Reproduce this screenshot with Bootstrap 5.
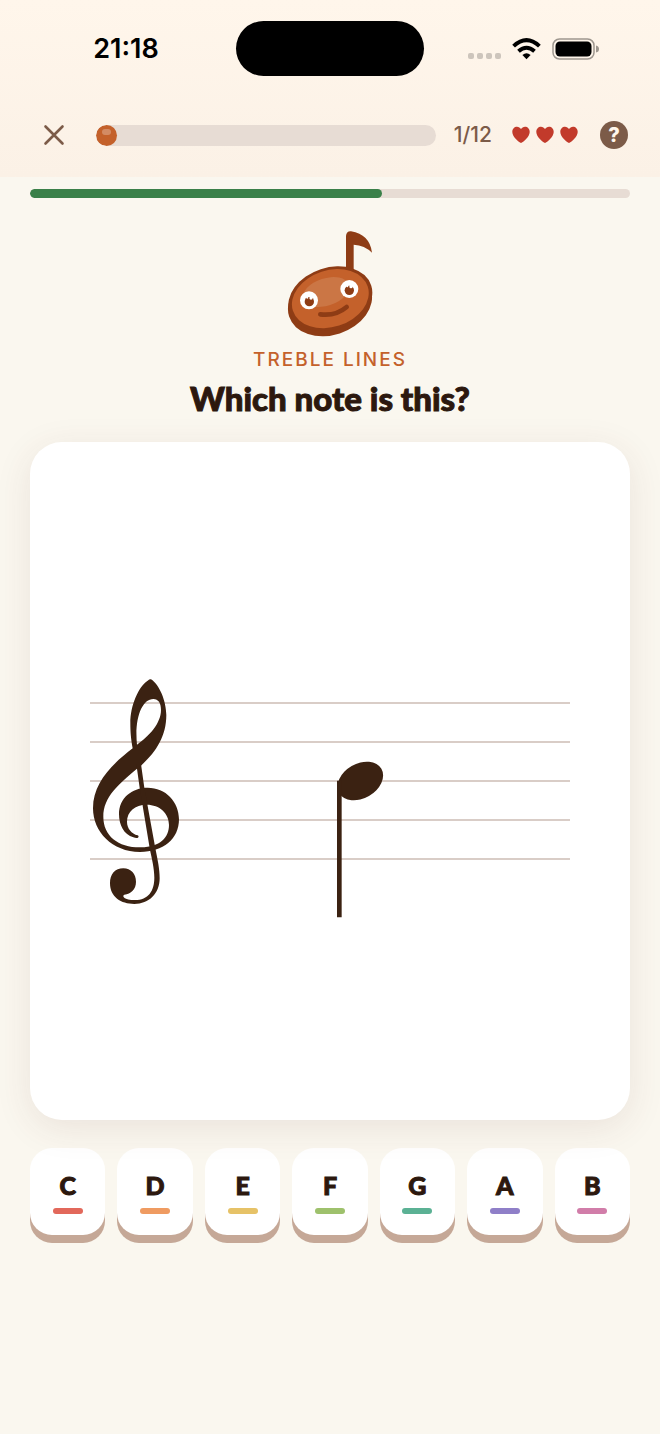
<!DOCTYPE html>
<html lang="en">
<head>
<meta charset="utf-8">
<meta name="viewport" content="width=device-width, initial-scale=1">
<title>Treble lines</title>
<link href="https://cdn.jsdelivr.net/npm/bootstrap@5.3.0/dist/css/bootstrap.min.css" rel="stylesheet">
<style>
  :root { --ink: #2c180e; --brown: #7c5b48; --track: #e7dcd4; --rust: #c4612b; --score: #3b2212; }
  body { background: #faf7ef; color: var(--ink); font-family: Inter, "Liberation Sans", sans-serif; }
  svg { display: block; }
  .top-area { background: linear-gradient(#fff6eb, #fbf1e6); padding-bottom: 28px; }
  .status-row { display: grid; grid-template-columns: 1fr 188px 1fr; align-items: center; padding-top: 21px; }
  .clock { font-size: 27px; line-height: 32px; font-weight: 600; color: #000; padding-left: 16px; }
  .island { height: 55px; border-radius: 28px; background: #000; }
  .signals { gap: 11px; padding-right: 18px; }
  .tool-row { padding: 45px 32px 0 40px; height: 73px; }
  .plain-btn { border: 0; padding: 0; background: none; color: var(--brown); }
  .close-btn { width: 28px; height: 28px; margin-right: 28px; }
  .lesson-progress { height: 21px; border-radius: 11px; background: var(--track); }
  .lesson-progress .progress-bar { position: relative; border-radius: 11px; background: var(--rust); min-width: 21px; }
  .lesson-progress .progress-bar::after { content: ""; position: absolute; top: 4px; left: 6px; right: 6px; height: 6px; border-radius: 3px; background: #d38b64; }
  .count { font-size: 21px; line-height: 24px; font-weight: 500; color: var(--brown); margin: 0 20px 0 18px; }
  .help-btn { width: 28px; height: 28px; margin-left: 22px; border-radius: 50%; background: var(--brown); color: #fff6eb; font-size: 20px; line-height: 28px; font-weight: 800; }
  .page-pad { padding: 12px 30px 40px; }
  .time-progress { height: 9px; border-radius: 5px; background: var(--track); }
  .time-progress .progress-bar { border-radius: 5px; background: #3a8049; }
  .mascot { margin: 32px auto 10px; }
  .topic { font-size: 19px; line-height: 24px; font-weight: 500; letter-spacing: 2px; color: var(--rust); }
  .question, .key-btn { font-family: Lato, sans-serif; font-weight: 900; -webkit-text-stroke: 1px var(--ink); stroke-linejoin: round; }
  .question { font-size: 33px; line-height: 40px; margin: 6px 0 24px; }
  .score-card { border: 0; border-radius: 32px; box-shadow: 0 8px 36px rgba(100, 50, 50, .1); }
  .keys { gap: 12px; margin-top: 28px; }
  .key-btn { flex: 1 1 0; height: 87px; border: 0; border-radius: 22px; background: #fff; box-shadow: 0 8px 0 #c5a897; color: var(--ink); font-size: 25px; line-height: 32px; padding: 21px 0 0; }
  .key-btn i { width: 30px; height: 6px; border-radius: 3px; margin: 7px auto 21px; display: block; }
  .k-c { background: #e2685b; } .k-d { background: #ef9b61; } .k-e { background: #e6c267; } .k-f { background: #9ec16c; }
  .k-g { background: #5bb194; } .k-a { background: #8f7fc8; } .k-b { background: #d17da9; }
</style>
</head>
<body>
<header class="top-area">
  <div class="status-row">
    <div class="clock text-center">21:18</div>
    <div class="island"></div>
    <div class="signals d-flex align-items-center justify-content-center">
      <svg width="33" height="22" viewBox="0 0 33 22" fill="#cdc5bc" aria-hidden="true"><rect y="15" width="6" height="6" rx="2"/><rect x="9" y="15" width="6" height="6" rx="2"/><rect x="18" y="15" width="6" height="6" rx="2"/><rect x="27" y="15" width="6" height="6" rx="2"/></svg>
      <svg width="29" height="22" viewBox="0 0 29 22" aria-hidden="true"><g fill="none" stroke="#000" stroke-width="4"><path d="M1.6 8.1Q14.500-3.900 27.400 8.100"/><path d="M6.500 13.200Q14.500 6.300 22.500 13.200"/></g><path d="M10.400 16.900Q14.500 13.500 18.600 16.900L14.500 21.200Z"/></svg>
      <svg width="47" height="22" viewBox="0 0 47 22" aria-hidden="true"><rect x="1" y="1" width="41" height="20" rx="6.500" fill="none" stroke="#9e978f" stroke-width="1.500"/><rect x="3.500" y="3.500" width="36" height="15" rx="4.500"/><path d="M44 7.500Q47 8 47 11T44 14.500Z" fill="#9e978f"/></svg>
    </div>
  </div>
  <div class="tool-row d-flex align-items-center">
    <button class="plain-btn close-btn" type="button" aria-label="Close"><svg width="28" height="28" viewBox="0 0 28 28"><path d="M5.500 5.500L22.500 22.500M22.500 5.500L5.500 22.500" stroke="currentColor" stroke-width="2.600" stroke-linecap="round"/></svg></button>
    <div class="progress lesson-progress flex-grow-1" role="progressbar" aria-label="Lesson progress" aria-valuenow="1" aria-valuemin="0" aria-valuemax="12"><div class="progress-bar" style="width:0%"></div></div>
    <div class="count">1/12</div>
    <svg width="66" height="18" viewBox="0 0 66 18" fill="#c23a2b" role="img" aria-label="Three lives"><defs><path id="heart" d="M9 17C7 16 .3 10.800 .3 5.900C.3 2.700 2.400.7 5 .7C6.700.7 8.200 1.700 9 3.100C9.800 1.700 11.300.7 13 .7C15.600.7 17.700 2.700 17.700 5.900C17.700 10.800 11 16 9 17Z"/></defs><use href="#heart"/><use href="#heart" x="24"/><use href="#heart" x="48"/></svg>
    <button class="plain-btn help-btn" type="button" aria-label="Help">?</button>
  </div>
</header>
<main class="page-pad">
  <div class="progress time-progress" role="progressbar" aria-label="Time" aria-valuenow="59" aria-valuemin="0" aria-valuemax="100"><div class="progress-bar" style="width:58.7%"></div></div>
  <svg class="mascot" width="88" height="108" viewBox="48 30 264 324" aria-hidden="true">
    <path d="M228 150V48Q229 33 243 34Q299 43 306 98Q284 76 251 74V150Z" fill="#8e3c15"/>
    <g fill="#8e3c15"><ellipse cx="180" cy="250" rx="129" ry="95" transform="rotate(-18 180 250)"/><ellipse cx="181" cy="236" rx="129" ry="93" transform="rotate(-18 181 236)"/></g>
    <ellipse cx="181" cy="236" rx="118" ry="85" transform="rotate(-18 181 236)" fill="#c4612b"/>
    <ellipse cx="168" cy="216" rx="72" ry="41" transform="rotate(-18 168 216)" fill="#cb7645"/>
    <g fill="#fff"><circle cx="117" cy="241" r="27"/><circle cx="238" cy="207" r="27"/></g>
    <g fill="#8e3c15"><circle cx="118" cy="245" r="14"/><circle cx="238" cy="211" r="14"/></g>
    <g fill="#fff"><circle cx="123" cy="234" r="5"/><circle cx="243" cy="200" r="5"/><circle cx="112" cy="233" r="3"/><circle cx="232" cy="199" r="3"/></g>
    <path d="M151 283Q197 289 230 261" fill="none" stroke="#8e3c15" stroke-width="14" stroke-linecap="round"/>
  </svg>
  <div class="topic text-center">TREBLE LINES</div>
  <h1 class="question text-center">Which note is this?</h1>
  <div class="card score-card">
    <svg class="w-100" viewBox="30 442 600 678" role="img" aria-label="A note on the middle line of a treble staff">
      <path d="M90 703H570M90 742H570M90 781H570M90 820H570M90 859H570" stroke="#cdbdb5" stroke-width="1.600"/>
      <g transform="translate(80 670) scale(.3333)" fill="#3b2212">
        <path fill-rule="evenodd" d="M213 28C238 43 259 94 259 135C259 200 226 248 183 287L170 297C117 342 70 380 70 440C70 498 115 533 183 532C240 531 267 503 267 465C267 430 239 404 200 404C165 404 141 425 141 455C141 476 155 491 173 496Q178 499 174 503Q169 505 160 502C132 494 117 465 117 432C117 385 155 353 203 353C257 353 297 395 297 448C297 507 250 546 180 546C96 546 39 485 39 415C39 340 94 284 158 235C153 207 151 188 151 160C151 105 176 50 203 32Q209 27 213 28ZM171 224C163 145 186 87 220 87C235 87 243 99 243 120C243 160 207 199 171 224Z"/>
        <path d="M169 282H183L193 353L226 535C233 570 239 597 239 625C239 671 207 702 163 702C123 702 90 681 90 640C90 613 105 595 130 595C153 595 168 612 168 635C168 658 153 672 133 674C125 678 132 690 165 690C205 690 223 663 223 623C223 597 215 562 210 540L179 353Z"/>
      </g>
      <g transform="translate(320 750) scale(.3333)" fill="#3b2212"><ellipse cx="121" cy="93" rx="73" ry="52" transform="rotate(-30 121 93)"/><path d="M51 92H65V502H51Z"/></g>
    </svg>
  </div>
  <div class="keys d-flex" role="group" aria-label="Answers">
    <button class="key-btn" type="button">C<i class="k-c"></i></button>
    <button class="key-btn" type="button">D<i class="k-d"></i></button>
    <button class="key-btn" type="button">E<i class="k-e"></i></button>
    <button class="key-btn" type="button">F<i class="k-f"></i></button>
    <button class="key-btn" type="button">G<i class="k-g"></i></button>
    <button class="key-btn" type="button">A<i class="k-a"></i></button>
    <button class="key-btn" type="button">B<i class="k-b"></i></button>
  </div>
</main>
<script src="https://cdn.jsdelivr.net/npm/bootstrap@5.3.0/dist/js/bootstrap.bundle.min.js"></script>
</body>
</html>
